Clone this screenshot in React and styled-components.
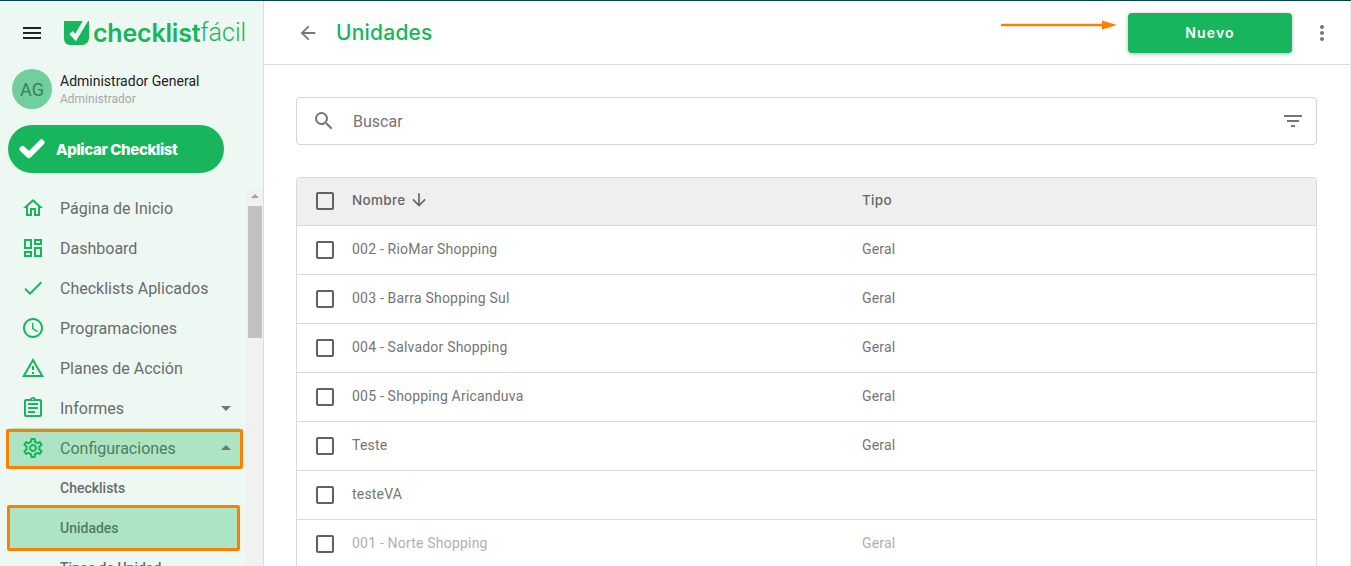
import React from "react";
import styled, { createGlobalStyle } from "styled-components";
import {
  MdMenu,
  MdOutlineHome,
  MdOutlineDashboard,
  MdCheck,
  MdOutlineSchedule,
  MdOutlineWarningAmber,
  MdOutlineAssignment,
  MdOutlineSettings,
  MdArrowDropDown,
  MdArrowDropUp,
  MdArrowBack,
  MdMoreVert,
  MdSearch,
  MdFilterList,
  MdArrowDownward,
} from "react-icons/md";

const GREEN = "#17b55c";
const ORANGE = "#ff7f00";
const SIDE_BG = "#eef8f3";

const Global = createGlobalStyle`
  html, body { margin: 0; padding: 0; height: 100%; overflow: hidden; background: #fff; }
  body { font-family: Roboto, "Liberation Sans", sans-serif; }
  * { box-sizing: border-box; }
`;

const Page = styled.div`
  width: 1351px;
  height: 566px;
  display: flex;
  border-top: 1px solid #004450;
  overflow: hidden;
`;

const Sidebar = styled.aside`
  width: 264px;
  flex: none;
  display: flex;
  flex-direction: column;
  background: ${SIDE_BG};
  border-right: 1px solid #dcdcdc;
`;

const Brand = styled.div`
  height: 64px;
  flex: none;
  display: flex;
  align-items: center;
  padding-left: 20px;
  color: #222;
  font-size: 24px;
  svg { flex: none; }
`;

const Logo = styled.div`
  display: flex;
  align-items: center;
  margin-left: 20px;
  color: ${GREEN};
  font-family: Inter, sans-serif;
  font-size: 25px;
  line-height: 28px;
  b { font-weight: 600; margin-left: 4px; letter-spacing: -0.2px; }
  span { font-weight: 300; font-family: Roboto, sans-serif; }
`;

const User = styled.div`
  display: flex;
  align-items: center;
  gap: 8px;
  margin: 4px 0 0 12px;
`;

const Avatar = styled.div`
  width: 40px;
  height: 40px;
  border-radius: 50%;
  background: #70cf9c;
  color: #3f7d5c;
  font-size: 18px;
  display: flex;
  align-items: center;
  justify-content: center;
`;

const UserName = styled.div`
  font-size: 14px;
  line-height: 20px;
  color: #222;
`;

const UserRole = styled.div`
  font-size: 12px;
  line-height: 16px;
  color: #a8a8a8;
`;

const ApplyButton = styled.button`
  width: 216px;
  height: 48px;
  margin: 16px 0 15px 8px;
  padding: 0 0 0 11px;
  border: 0;
  border-radius: 24px;
  background: ${GREEN};
  color: #fff;
  display: flex;
  align-items: center;
  gap: 11px;
  font-family: Inter, sans-serif;
  font-size: 15px;
  font-weight: 800;
  letter-spacing: -0.35px;
`;

const SideBody = styled.div`
  flex: 1;
  min-height: 0;
  display: flex;
`;

const Nav = styled.nav`
  flex: 1;
  overflow: hidden;
`;

const NavItem = styled.div`
  position: relative;
  height: 40px;
  display: flex;
  align-items: center;
  margin-right: ${(p) => (p.$active ? "6px" : "0")};
  margin-left: ${(p) => (p.$active ? "9px" : "0")};
  padding-left: ${(p) => (p.$active ? "12px" : "21px")};
  padding-right: ${(p) => (p.$active ? "2px" : "8px")};
  background: ${(p) => (p.$active ? "#ade4c3" : "transparent")};
  color: ${(p) => (p.$active ? "#4d7d63" : "#6b6b6b")};
  font-size: 16px;
  svg.lead { color: ${GREEN}; flex: none; width: 24px; height: 24px; margin-right: 15px; }
  svg.caret { color: #757575; margin-left: auto; width: 24px; height: 24px; }
`;

const SubItem = styled.div`
  position: relative;
  height: 40px;
  display: flex;
  align-items: center;
  margin: ${(p) => (p.$active ? "0 9px 0 10px" : "0")};
  padding-left: ${(p) => (p.$active ? "50px" : "60px")};
  background: ${(p) => (p.$active ? "#ade4c3" : "transparent")};
  color: ${(p) => (p.$active ? "#4d7d63" : "#6b6b6b")};
  font-size: 14px;
  font-weight: 500;
`;

const Marker = styled.span`
  position: absolute;
  top: ${(p) => (p.$tight ? "1px" : "-3px")};
  bottom: ${(p) => (p.$tight ? "-1px" : "-3px")};
  left: -3px;
  right: -3px;
  border: 3px solid ${ORANGE};
  border-radius: 2px;
  pointer-events: none;
`;

const Track = styled.div`
  width: 17px;
  flex: none;
  background: #f1f1f1;
  display: flex;
  flex-direction: column;
  align-items: center;
  padding-top: 6px;
`;

const TrackArrow = styled.span`
  width: 0;
  height: 0;
  border-left: 4px solid transparent;
  border-right: 4px solid transparent;
  border-bottom: 4px solid #a3a3a3;
  margin-bottom: 8px;
`;

const Thumb = styled.div`
  width: 14px;
  height: 132px;
  background: #c1c1c1;
`;

const Main = styled.main`
  position: relative;
  flex: 1;
  min-width: 0;
  display: flex;
  flex-direction: column;
  border-right: 1px solid #ececec;
`;

const Header = styled.header`
  height: 64px;
  flex: none;
  display: flex;
  align-items: center;
  padding: 0 16px 0 33px;
  border-bottom: 1px solid #d9d9d9;
  color: #757575;
`;

const Title = styled.h1`
  margin: 0 0 0 17px;
  font-family: Inter, sans-serif;
  font-size: 21px;
  font-weight: 500;
  letter-spacing: 0.2px;
  color: ${GREEN};
`;

const NewButton = styled.button`
  width: 164px;
  height: 40px;
  margin-left: auto;
  border: 0;
  border-radius: 4px;
  background: ${GREEN};
  color: #fff;
  font-family: Inter, sans-serif;
  font-size: 14px;
  font-weight: 600;
  letter-spacing: 1.2px;
  box-shadow: 0 1px 4px rgba(0, 0, 0, 0.3);
`;

const MoreButton = styled.span`
  display: flex;
  margin-left: 18px;
  color: #757575;
`;

const CalloutArrow = styled.svg`
  position: absolute;
  left: 737px;
  top: 18px;
`;

const Content = styled.div`
  flex: 1;
  min-height: 0;
  padding: 32px 33px 0 32px;
`;

const SearchBox = styled.div`
  height: 48px;
  display: flex;
  align-items: center;
  padding: 0 11px 0 15px;
  border: 1px solid #d5d5d5;
  border-radius: 4px;
  color: #757575;
  font-size: 16px;
  span { margin-left: 17px; color: #757575; }
  svg:last-child { margin-left: auto; }
`;

const Table = styled.div`
  margin-top: 32px;
  border: 1px solid #d9d9d9;
  border-bottom: 0;
  border-radius: 4px 4px 0 0;
`;

const Row = styled.div`
  display: grid;
  grid-template-columns: 36px 510px 1fr;
  align-items: center;
  height: ${(p) => (p.$head ? "48px" : "49px")};
  padding-left: 19px;
  border-bottom: 1px solid #d9d9d9;
  background: ${(p) => (p.$head ? "#efefef" : "#fff")};
  color: ${(p) => (p.$muted ? "#b0b0b0" : "#757575")};
  font-size: 14px;
  letter-spacing: 0.2px;
`;

const Cell = styled.div`
  margin-top: -2px;
`;

const HeadCell = styled.div`
  display: flex;
  align-items: center;
  gap: 4px;
  margin-top: -4px;
  color: #666;
  font-family: Inter, sans-serif;
  font-size: 13.5px;
  font-weight: 500;
  letter-spacing: 0.3px;
`;

const Check = styled.span`
  width: 18px;
  height: 18px;
  border: 2px solid #616161;
  border-radius: 2px;
  margin-top: -1px;
`;

const BrandMark = () => (
  <svg width="25" height="24" viewBox="0 0 25 24">
    <path d="M0 0H25V17a7 7 0 0 1-7 7H6a6 6 0 0 1-6-6z" fill={GREEN} />
    <path d="M7 11.5l4.5 5L22 -1" fill="none" stroke={SIDE_BG} strokeWidth="4.5" />
  </svg>
);

const ThickCheck = () => (
  <svg width="26" height="20" viewBox="0 0 26 20">
    <path d="M3.5 10l6.5 6L22.5 3.5" fill="none" stroke="#fff" strokeWidth="6" strokeLinejoin="round" strokeLinecap="round" />
  </svg>
);

const links = [
  ["Página de Inicio", MdOutlineHome],
  ["Dashboard", MdOutlineDashboard],
  ["Checklists Aplicados", MdCheck],
  ["Programaciones", MdOutlineSchedule],
  ["Planes de Acción", MdOutlineWarningAmber],
];

const units = [
  { name: "002 - RioMar Shopping", type: "Geral" },
  { name: "003 - Barra Shopping Sul", type: "Geral" },
  { name: "004 - Salvador Shopping", type: "Geral" },
  { name: "005 - Shopping Aricanduva", type: "Geral" },
  { name: "Teste", type: "Geral" },
  { name: "testeVA", type: "" },
  { name: "001 - Norte Shopping", type: "Geral", muted: true },
];

const App = () => (
  <Page>
    <Global />
    <Sidebar>
      <Brand>
        <MdMenu />
        <Logo>
          <BrandMark />
          <b>checklist</b>
          <span>fácil</span>
        </Logo>
      </Brand>
      <User>
        <Avatar>AG</Avatar>
        <div>
          <UserName>Administrador General</UserName>
          <UserRole>Administrador</UserRole>
        </div>
      </User>
      <ApplyButton>
        <ThickCheck />
        Aplicar Checklist
      </ApplyButton>
      <SideBody>
        <Nav>
          {links.map(([label, Icon]) => (
            <NavItem key={label}>
              <Icon className="lead" />
              {label}
            </NavItem>
          ))}
          <NavItem>
            <MdOutlineAssignment className="lead" />
            Informes
            <MdArrowDropDown className="caret" />
          </NavItem>
          <NavItem $active>
            <MdOutlineSettings className="lead" />
            Configuraciones
            <MdArrowDropUp className="caret" />
            <Marker $tight />
          </NavItem>
          <SubItem>Checklists</SubItem>
          <SubItem $active>
            Unidades
            <Marker />
          </SubItem>
          <SubItem>Tipos de Unidad</SubItem>
        </Nav>
        <Track>
          <TrackArrow />
          <Thumb />
        </Track>
      </SideBody>
    </Sidebar>
    <Main>
      <Header>
        <MdArrowBack size={22} />
        <Title>Unidades</Title>
        <NewButton>Nuevo</NewButton>
        <MoreButton>
          <MdMoreVert size={24} />
        </MoreButton>
      </Header>
      <CalloutArrow width="116" height="12" viewBox="0 0 116 12">
        <path d="M0 6h102" stroke={ORANGE} strokeWidth="2.5" strokeLinecap="round" />
        <path d="M101 1.5l15 4.5-15 4.5z" fill={ORANGE} />
      </CalloutArrow>
      <Content>
        <SearchBox>
          <MdSearch size={24} />
          <span>Buscar</span>
          <MdFilterList size={24} />
        </SearchBox>
        <Table>
          <Row $head>
            <Check />
            <HeadCell>
              Nombre
              <MdArrowDownward size={20} />
            </HeadCell>
            <HeadCell>Tipo</HeadCell>
          </Row>
          {units.map((unit) => (
            <Row key={unit.name} $muted={unit.muted}>
              <Check />
              <Cell>{unit.name}</Cell>
              <Cell>{unit.type}</Cell>
            </Row>
          ))}
        </Table>
      </Content>
    </Main>
  </Page>
);

export default App;
